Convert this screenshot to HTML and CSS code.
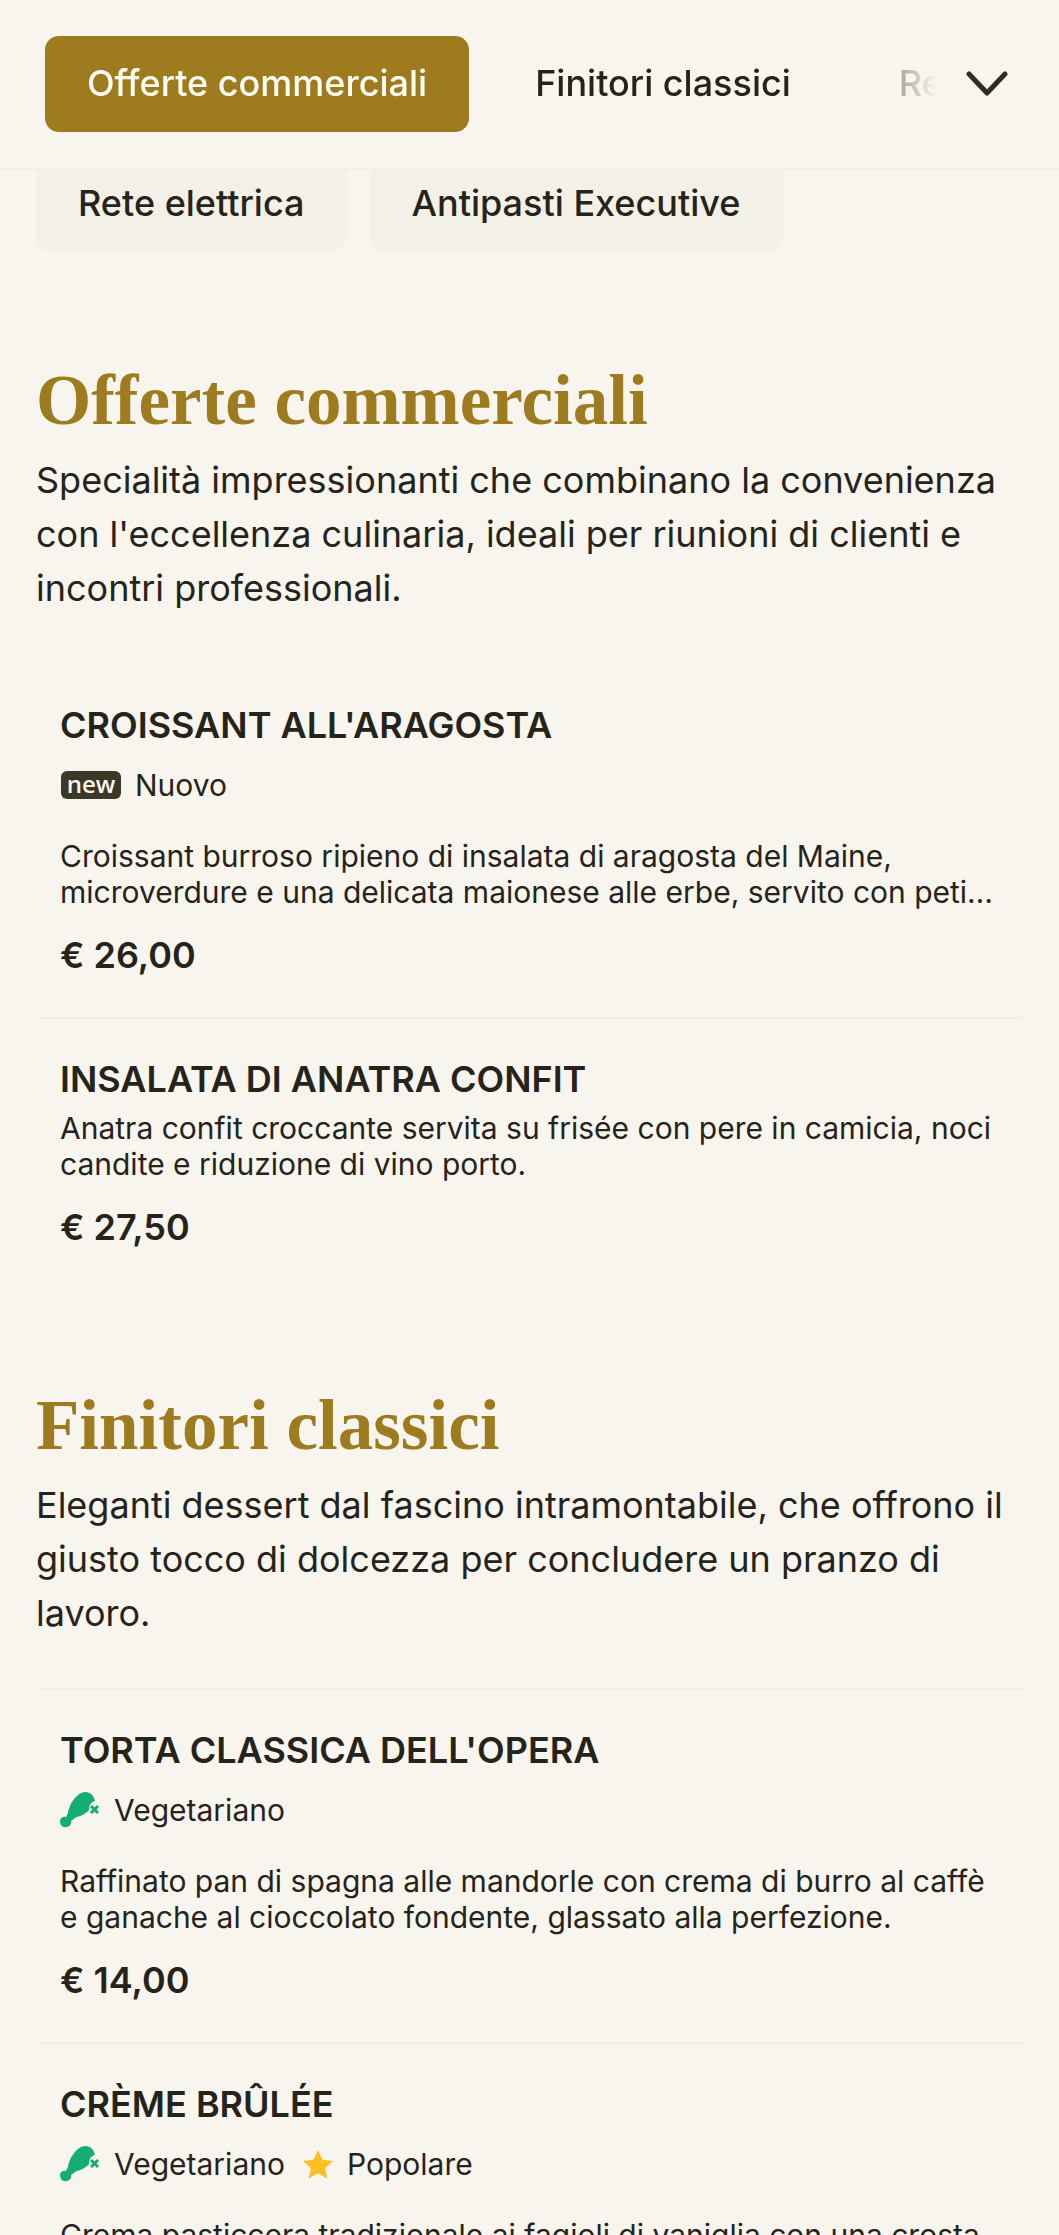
FILE: index.html
```html
<!DOCTYPE html>
<html lang="it">
<head>
<meta charset="utf-8">
<title>Menu</title>
<link rel="stylesheet" href="styles.css">
</head>
<body>
<header class="topbar">
  <nav class="tabs">
    <a class="tab active">Offerte commerciali</a>
    <a class="tab">Finitori classici</a>
    <a class="tab">Rete elettrica</a>
  </nav>
  <svg class="chevron" viewBox="0 0 42 26" aria-hidden="true"><polyline points="3,3 21,22 39,3"/></svg>
</header>
<div class="chips">
  <a class="chip">Rete elettrica</a>
  <a class="chip">Antipasti Executive</a>
</div>
<main>
  <section class="section">
    <h2>Offerte commerciali</h2>
    <p class="lead">Specialità impressionanti che combinano la convenienza con l'eccellenza culinaria, ideali per riunioni di clienti e incontri professionali.</p>
    <article class="item">
      <h3>CROISSANT ALL'ARAGOSTA</h3>
      <div class="tags"><span class="tag"><span class="new">new</span>Nuovo</span></div>
      <p class="desc">Croissant burroso ripieno di insalata di aragosta del Maine, microverdure e una delicata maionese alle erbe, servito con petite insalata verde e patatine fatte in casa.</p>
      <div class="price">€ 26,00</div>
    </article>
    <article class="item">
      <h3>INSALATA DI ANATRA CONFIT</h3>
      <p class="desc">Anatra confit croccante servita su frisée con pere in camicia, noci candite e riduzione di vino porto.</p>
      <div class="price">€ 27,50</div>
    </article>
  </section>
  <section class="section">
    <h2>Finitori classici</h2>
    <p class="lead">Eleganti dessert dal fascino intramontabile, che offrono il giusto tocco di dolcezza per concludere un pranzo di lavoro.</p>
    <article class="item">
      <h3>TORTA CLASSICA DELL'OPERA</h3>
      <div class="tags"><span class="tag"><svg class="leg" viewBox="0 0 40 36" aria-hidden="true"><path class="leg-fill" d="M25 0C31 0 34 4 35 9C31 10 29 13 29 18C25 23 19 24 15 26L11 29C12 33 8 36 4 35C2 35 0 32 0 29C0 26 3 24 6 25L8 21C9 13 16 1 25 0Z"/><path class="leg-x" d="M31 14L38 21M38 14L31 21"/></svg>Vegetariano</span></div>
      <p class="desc">Raffinato pan di spagna alle mandorle con crema di burro al caffè e ganache al cioccolato fondente, glassato alla perfezione.</p>
      <div class="price">€ 14,00</div>
    </article>
    <article class="item">
      <h3>CRÈME BRÛLÉE</h3>
      <div class="tags"><span class="tag"><svg class="leg" viewBox="0 0 40 36" aria-hidden="true"><path class="leg-fill" d="M25 0C31 0 34 4 35 9C31 10 29 13 29 18C25 23 19 24 15 26L11 29C12 33 8 36 4 35C2 35 0 32 0 29C0 26 3 24 6 25L8 21C9 13 16 1 25 0Z"/><path class="leg-x" d="M31 14L38 21M38 14L31 21"/></svg>Vegetariano</span><span class="tag"><svg class="star" viewBox="0 0 32 30" aria-hidden="true"><path d="M16 1L20.4 10.8L31 12L23.1 19.1L25.3 29.6L16 24.3L6.700 29.6L8.900 19.1L1 12L11.600 10.800Z"/></svg>Popolare</span></div>
      <p class="desc">Crema pasticcera tradizionale ai fagioli di vaniglia con una crosta di zucchero caramellato croccante.</p>
      <div class="price">€ 13,00</div>
    </article>
  </section>
</main>
</body>
</html>
```
FILE: styles.css
```css
* { box-sizing: border-box; }
html, body { margin: 0; height: 2235px; overflow: hidden; }
body {
  background: #f8f5ef;
  color: #26241a;
  font-family: Inter, "Noto Sans", sans-serif;
}
.topbar {
  height: 170px;
  padding: 36px 51px 0 45px;
  display: flex;
  align-items: flex-start;
  justify-content: space-between;
  border-bottom: 2px solid #f2efe8;
}
.tabs {
  display: flex;
  gap: 24px;
  width: 892px;
  overflow: hidden;
  -webkit-mask-image: linear-gradient(to right, #000 790px, transparent 892px);
  mask-image: linear-gradient(to right, #000 790px, transparent 892px);
}
.tab {
  flex: none;
  height: 96px;
  padding: 0 42px 2px;
  display: flex;
  align-items: center;
  border-radius: 14px;
  font-size: 36px;
  font-weight: 500;
}
.tab.active { background: #9e7b1e; color: #fffdf5; }
.chevron {
  width: 42px;
  height: 26px;
  margin-top: 35px;
  fill: none;
  stroke: #2f2c20;
  stroke-width: 5;
  stroke-linecap: round;
  stroke-linejoin: round;
}
.chips {
  display: flex;
  gap: 24px;
  padding: 0 36px;
}
.chip {
  height: 82px;
  padding: 0 42px 17px;
  display: flex;
  align-items: center;
  background: #f3f0e7;
  border-radius: 0 0 16px 16px;
  font-size: 36px;
  font-weight: 500;
}
.chip + .chip { margin-left: -1px; padding-right: 44px; }
main { padding: 0 36px; }
.section { padding-top: 111px; }
.section + .section { padding-top: 99px; }
h2 {
  margin: 0;
  font-family: "Liberation Serif", serif;
  font-size: 71px;
  line-height: 74px;
  font-weight: 700;
  color: #9e7b1e;
}
.lead {
  margin: 16px 0 0;
  font-size: 36px;
  line-height: 54px;
}
.item {
  padding: 38px 24px 40px;
  border-top: 2px solid #f2efe8;
}
.lead + .item { margin-top: 48px; }
h3 {
  margin: 0 0 9px;
  font-size: 36px;
  line-height: 44px;
  font-weight: 600;
}
.tags {
  display: flex;
  gap: 17px;
  margin-top: 18px;
  margin-bottom: 33px;
  height: 40px;
}
.tag {
  display: flex;
  align-items: center;
  gap: 14px;
  font-size: 30px;
}
.new {
  width: 60px;
  height: 28px;
  margin-left: 1px;
  display: flex;
  align-items: center;
  justify-content: center;
  border-radius: 6px;
  background: #3b3829;
  color: #f8f5ef;
  font-family: "Open Sans", sans-serif;
  font-size: 24px;
  font-weight: 600;
  line-height: 1;
  padding-bottom: 3px;
}
.leg { width: 40px; height: 36px; }
.leg-fill { fill: #14ae74; }
.leg-x { fill: none; stroke: #14ae74; stroke-width: 3; }
.star { width: 32px; height: 30px; margin-right: -1px; fill: #fbbf24; }
.desc {
  margin: 0;
  font-size: 30px;
  line-height: 36px;
  display: -webkit-box;
  -webkit-box-orient: vertical;
  -webkit-line-clamp: 2;
  overflow: hidden;
}
.price {
  margin-top: 23px;
  font-size: 36px;
  line-height: 44px;
  font-weight: 600;
}
```
